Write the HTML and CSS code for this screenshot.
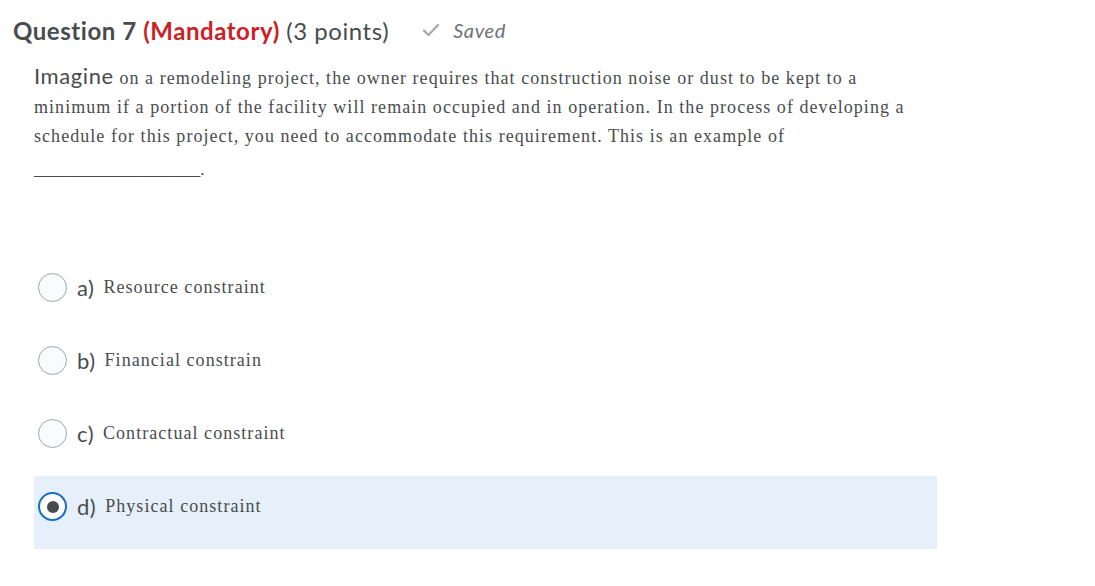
FILE: index.html
```html
<!DOCTYPE html>
<html>
<head>
<meta charset="utf-8">
<link rel="stylesheet" href="styles.css">
</head>
<body>
<div class="page">
  <div class="header">
    <h2 class="title">Question 7 <span class="mand">(Mandatory)</span> <span class="pts">(3 points)</span></h2>
    <div class="saved">
      <svg class="check" width="18" height="14" viewBox="0 0 18 14"><path d="M2 7.5 L6.5 12 L16 2" fill="none" stroke="#a7acb0" stroke-width="2.4" stroke-linecap="round" stroke-linejoin="round"/></svg>
      <span>Saved</span>
    </div>
  </div>
  <div class="question">
    <p><span class="lead">Imagine</span> on a remodeling project, the owner requires that construction noise or dust to be kept to a minimum if a portion of the facility will remain occupied and in operation. In the process of developing a schedule for this project, you need to accommodate this requirement. This is an example of</p>
    <p class="blank">___________________.</p>
  </div>
  <div class="options">
    <div class="opt"><span class="radio"></span><span class="letter">a)</span><span class="txt">Resource constraint</span></div>
    <div class="opt"><span class="radio"></span><span class="letter">b)</span><span class="txt">Financial constrain</span></div>
    <div class="opt"><span class="radio"></span><span class="letter">c)</span><span class="txt">Contractual constraint</span></div>
    <div class="opt sel"><span class="radio on"></span><span class="letter">d)</span><span class="txt">Physical constraint</span></div>
  </div>
</div>
</body>
</html>
```
FILE: styles.css
```css
html, body { margin: 0; padding: 0; background: #fff; }
body { font-family: "Liberation Serif", serif; color: #494c4e; }
.page { padding: 13px 0 0 13px; width: 924px; }
.header { display: flex; align-items: center; height: 34px; }
.title { margin: 0; font-family: Lato, sans-serif; font-weight: 700; font-size: 24px; letter-spacing: 0.55px; color: #494c4e; }
.mand { color: #cd2026; }
.pts { font-weight: 400; }
.saved { display: flex; align-items: center; margin-left: 33px; font-family: Lato, sans-serif; font-style: italic; font-size: 20px; letter-spacing: 0.6px; color: #6e7376; }
.check { margin-right: 13px; }
.question { padding-left: 21px; margin-top: 14px; width: 880px; }
.question p { margin: 0; font-size: 18px; letter-spacing: 1.05px; line-height: 29px; }
.lead { font-family: Lato, sans-serif; font-size: 22px; letter-spacing: 0.6px; }
.question p.blank { margin-top: 4px; letter-spacing: 0; font-size: 17.5px; }
.options { margin-top: 73px; padding-left: 21px; }
.opt { display: flex; align-items: center; height: 73px; padding: 0 0 12px 4px; box-sizing: border-box; }
.opt.sel { background: #e6f0fa; }
.radio { width: 29px; height: 29px; border: 1px solid #a0a5a8; border-radius: 50%; background: #f9fbff; box-sizing: border-box; flex: none; position: relative; }
.radio.on { border: 2px solid #1a6fc5; background: #fff; }
.radio.on::after { content: ""; position: absolute; left: 6.5px; top: 6.5px; width: 12px; height: 12px; border-radius: 50%; background: #494c4e; }
.letter { font-family: Lato, sans-serif; font-size: 22px; letter-spacing: 0.5px; margin-left: 10px; }
.txt { font-size: 18px; letter-spacing: 1.05px; margin-left: 9px; }
```
